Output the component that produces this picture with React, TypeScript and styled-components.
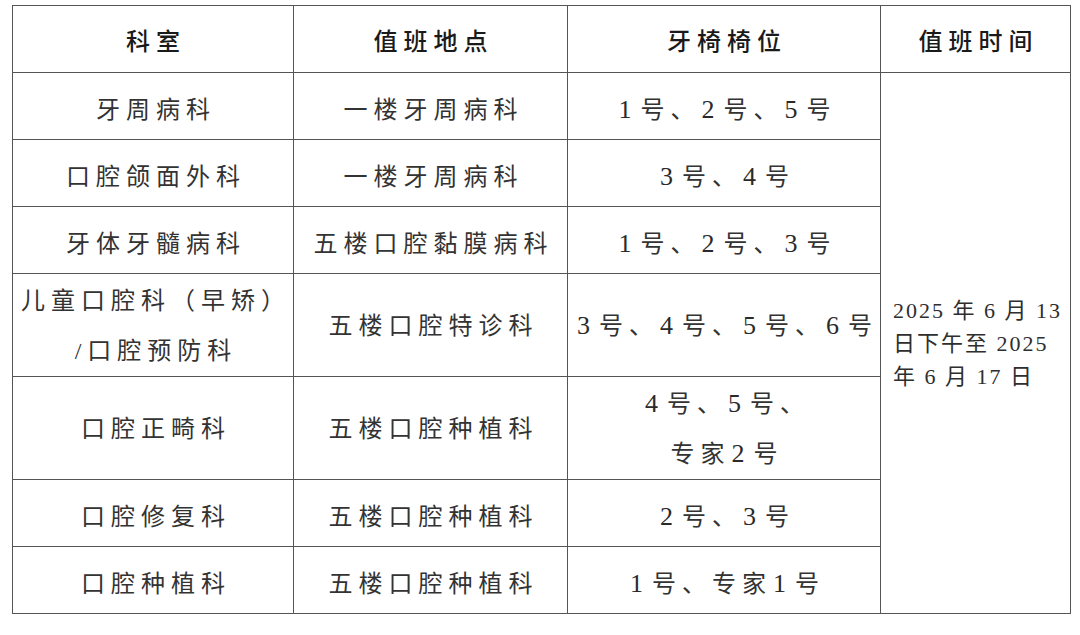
import { Fragment } from "react";
import styled, { createGlobalStyle } from "styled-components";

const GlobalStyle = createGlobalStyle`
  html, body {
    margin: 0;
    padding: 0;
    background: #ffffff;
  }
`;

const rows = [
  { dept: ["牙周病科"], place: "一楼牙周病科", chairs: ["1号、2号、5号"], tall: false },
  { dept: ["口腔颌面外科"], place: "一楼牙周病科", chairs: ["3号、4号"], tall: false },
  { dept: ["牙体牙髓病科"], place: "五楼口腔黏膜病科", chairs: ["1号、2号、3号"], tall: false },
  {
    dept: ["儿童口腔科（早矫）", "/口腔预防科"],
    place: "五楼口腔特诊科",
    chairs: ["3号、4号、5号、6号"],
    tall: true,
  },
  { dept: ["口腔正畸科"], place: "五楼口腔种植科", chairs: ["4号、5号、", "专家2号"], tall: true },
  { dept: ["口腔修复科"], place: "五楼口腔种植科", chairs: ["2号、3号"], tall: false },
  { dept: ["口腔种植科"], place: "五楼口腔种植科", chairs: ["1号、专家1号"], tall: false },
];

const dateLines = ["2025 年 6 月 13", "日下午至 2025", "年 6 月 17 日"];

// digits in the original are set in a larger Times-like face
function withNumbers(text: string) {
  return text.split(/(\d+)/).map((part, i) =>
    /^\d+$/.test(part) ? <Num key={i}>{part}</Num> : <Fragment key={i}>{part}</Fragment>
  );
}

export default function App() {
  return (
    <>
      <GlobalStyle />
      <Page>
        <Table>
          <colgroup>
            <col style={{ width: 281 }} />
            <col style={{ width: 274 }} />
            <col style={{ width: 313 }} />
            <col style={{ width: 190 }} />
          </colgroup>
          <thead>
            <HeadRow>
              <HeadCell>科室</HeadCell>
              <HeadCell>值班地点</HeadCell>
              <HeadCell>牙椅椅位</HeadCell>
              <HeadCell>值班时间</HeadCell>
            </HeadRow>
          </thead>
          <tbody>
            {rows.map((row, i) => (
              <BodyRow key={i} $tall={row.tall}>
                <Cell $tall={row.tall}>
                  {row.dept.map((line) => (
                    <Line key={line}>{line}</Line>
                  ))}
                </Cell>
                <Cell $tall={row.tall}>
                  <Line>{row.place}</Line>
                </Cell>
                <Cell $tall={row.tall}>
                  {row.chairs.map((line) => (
                    <Line key={line}>{withNumbers(line)}</Line>
                  ))}
                </Cell>
                {i === 0 && (
                  <DateCell rowSpan={rows.length}>
                    {dateLines.map((line) => (
                      <DateLine key={line}>{line}</DateLine>
                    ))}
                  </DateCell>
                )}
              </BodyRow>
            ))}
          </tbody>
        </Table>
      </Page>
    </>
  );
}

const Page = styled.div`
  padding: 5px 0 0 12px;
  width: 1080px;
  height: 635px;
  box-sizing: border-box;
  background: #fff;
`;

const Table = styled.table`
  border-collapse: collapse;
  table-layout: fixed;
  width: 1058px;
  border: 1px solid #6a6a6a;
  font-family: "Liberation Serif", "Noto Sans CJK SC", serif;
`;

const HeadRow = styled.tr`
  height: 67px;
`;

const BodyRow = styled.tr<{ $tall: boolean }>`
  height: ${(p) => (p.$tall ? "103px" : "67px")};
`;

const HeadCell = styled.th`
  border: 1px solid #555;
  padding: 0;
  font-size: 24px;
  font-weight: 500;
  letter-spacing: 6px;
  color: #1a1a1a;
  text-align: center;
  vertical-align: middle;
  text-indent: 6px;
`;

const Cell = styled.td<{ $tall: boolean }>`
  border: 1px solid #555;
  padding: ${(p) => (p.$tall ? "2px 0 0" : "8px 0 0")};
  font-size: 24px;
  font-weight: 400;
  letter-spacing: 6px;
  color: #333;
  text-align: center;
  vertical-align: middle;
  white-space: nowrap;
  text-indent: 6px;
`;

const Line = styled.div`
  line-height: 50px;
`;

const Num = styled.span`
  font-size: 26px;
  margin: 0 3px 0 1px;
  color: #2a2a2a;
`;

const DateCell = styled.td`
  border: 1px solid #555;
  padding: 0 0 0 12px;
  font-size: 22px;
  letter-spacing: 2px;
  color: #2e2e2e;
  text-align: left;
  vertical-align: middle;
  white-space: nowrap;
`;

const DateLine = styled.div`
  line-height: 33px;
`;
